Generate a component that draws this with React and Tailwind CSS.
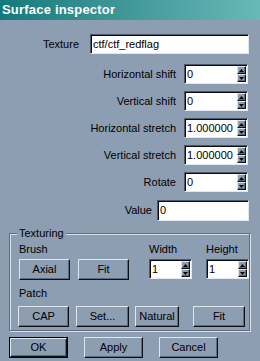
import React from "react";

const sunken =
  "bg-white border border-t-[#4d5868] border-l-[#4d5868] border-r-[#e2e8ef] border-b-[#e2e8ef] shadow-[inset_1px_1px_0_#0a0c10]";
const raised =
  "bg-[#8d9db2] border border-t-[#dfe6ee] border-l-[#dfe6ee] border-r-[#0e1116] border-b-[#0e1116] shadow-[inset_-1px_-1px_0_#5b6a80]";

const Arrow = ({ up }) => (
  <div className={`flex-1 flex items-center justify-center ${raised}`}>
    <svg width="5" height="3" viewBox="0 0 5 3">
      {up ? <path d="M2.5 0L5 3H0z" fill="#000" /> : <path d="M0 0h5L2.5 3z" fill="#000" />}
    </svg>
  </div>
);

const Spin = ({ value, width }) => (
  <div className={`flex h-[20px] ${width} ${sunken}`}>
    <span className="flex-1 pl-[2px] leading-[18px]">{value}</span>
    <div className="w-[10px] flex flex-col pt-[1px] pb-[1px] pr-[1px]">
      <Arrow up />
      <Arrow />
    </div>
  </div>
);

const Button = ({ children, width, def }) =>
  def ? (
    <div className={`border border-black h-[21px] ${width}`}>
      <div className={`h-full flex items-center justify-center ${raised}`}>{children}</div>
    </div>
  ) : (
    <div className={`h-[21px] flex items-center justify-center ${width} ${raised}`}>{children}</div>
  );

const SpinRow = ({ label, value }) => (
  <div className="flex items-center h-[20px]">
    <span className="w-[176px] text-right">{label}</span>
    <div className="ml-[8px]">
      <Spin value={value} width="w-[64px]" />
    </div>
  </div>
);

export default function App() {
  return (
    <div className="w-[260px] h-[361px] overflow-hidden bg-[#8d9db2] text-black text-[11px] font-['Liberation_Sans',Arial,sans-serif]">
      <div className="h-[20px] flex items-center pl-[2px] bg-gradient-to-r from-[#127a7b] to-[#68b8b7] text-white font-bold text-[13px] tracking-[0.2px]">
        Surface inspector
      </div>

      <div className="mt-[14px] flex items-center h-[20px]">
        <span className="w-[79px] text-right">Texture</span>
        <div className={`ml-[11px] w-[159px] h-[20px] pl-[2px] leading-[18px] ${sunken}`}>ctf/ctf_redflag</div>
      </div>

      <div className="mt-[10px] flex flex-col gap-[7px]">
        <SpinRow label="Horizontal shift" value="0" />
        <SpinRow label="Vertical shift" value="0" />
        <SpinRow label="Horizontal stretch" value="1.000000" />
        <SpinRow label="Vertical stretch" value="1.000000" />
        <SpinRow label="Rotate" value="0" />
      </div>

      <div className="mt-[8px] flex items-center h-[21px]">
        <span className="w-[152px] text-right">Value</span>
        <div className={`ml-[5px] w-[92px] h-[21px] pl-[2px] leading-[19px] ${sunken}`}>0</div>
      </div>

      <div className="relative mt-[12px] ml-[9px] w-[241px] h-[98px] border border-[#5f6e84] shadow-[inset_1px_1px_0_#d8e0ea,1px_1px_0_#d8e0ea]">
        <span className="absolute -top-[8px] left-[7px] px-[2px] bg-[#8d9db2] leading-[14px]">Texturing</span>
        <div className="flex mt-[9px]">
          <div className="ml-[9px] w-[119px] flex flex-col">
            <span className="leading-[13px]">Brush</span>
            <div className="mt-[3px] flex gap-[8px]">
              <Button width="w-[51px]">Axial</Button>
              <Button width="w-[51px]">Fit</Button>
            </div>
          </div>
          <div className="ml-[13px] flex flex-col">
            <span className="leading-[13px]">Width</span>
            <div className="mt-[3px]">
              <Spin value="1" width="w-[43px]" />
            </div>
          </div>
          <div className="ml-[14px] flex flex-col">
            <span className="leading-[13px]">Height</span>
            <div className="mt-[3px]">
              <Spin value="1" width="w-[43px]" />
            </div>
          </div>
        </div>
        <div className="ml-[9px] mt-[7px] leading-[13px]">Patch</div>
        <div className="ml-[8px] mt-[6px] flex">
          <Button width="w-[51px]">CAP</Button>
          <div className="ml-[7px]"><Button width="w-[53px]">Set...</Button></div>
          <div className="ml-[6px]"><Button width="w-[44px]">Natural</Button></div>
          <div className="ml-[14px]"><Button width="w-[52px]">Fit</Button></div>
        </div>
      </div>

      <div className="mt-[6px] ml-[9px] flex gap-[16px]">
        <Button width="w-[59px]" def>OK</Button>
        <Button width="w-[59px]">Apply</Button>
        <Button width="w-[59px]">Cancel</Button>
      </div>
    </div>
  );
}
